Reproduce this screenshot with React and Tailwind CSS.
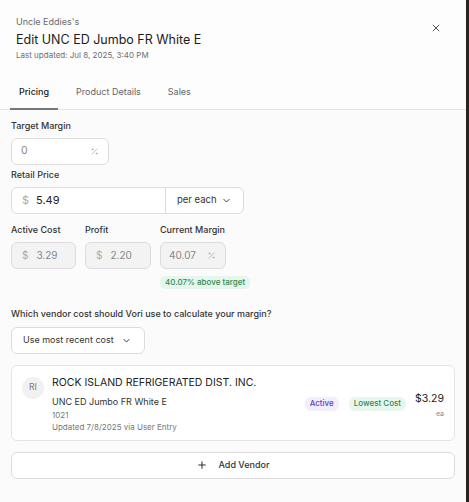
import React from "react";

const Chevron = ({ className = "" }) => (
  <svg className={className} width="9" height="9" viewBox="0 0 24 24" fill="none" stroke="currentColor" strokeWidth="2.5" strokeLinecap="round" strokeLinejoin="round">
    <path d="M5 9l7 7 7-7" />
  </svg>
);

const Pct = () => (
  <svg width="9" height="9" viewBox="0 0 24 24" fill="none" stroke="currentColor" strokeWidth="2" strokeLinecap="round">
    <path d="M19 5L5 19" />
    <circle cx="6.5" cy="6.5" r="1.5" />
    <circle cx="17.5" cy="17.5" r="1.5" />
  </svg>
);

const Label = ({ children, className = "" }) => (
  <div className={"text-[9px] font-medium leading-[12px] text-[#333] " + className}>{children}</div>
);

export default function App() {
  return (
    <div className="flex h-[502px] w-[469px] bg-[#2b241d]" style={{ fontFamily: "Inter, 'Noto Sans', sans-serif" }}>
      <div className="flex h-full w-[466px] flex-col bg-[#fbfbfb]">
        {/* Header */}
        <div className="bg-[#fdfdfd]">
          <div className="flex items-start justify-between pl-4 pr-[25px] pt-[16px]">
            <div className="flex flex-col">
              <div className="text-[9px] leading-[12px] text-[#6b6b6b]">Uncle Eddies's</div>
              <div className="mt-[4px] text-[12.5px] leading-[16px] text-[#1c1c1c]">Edit UNC ED Jumbo FR White E</div>
              <div className="mt-[1.5px] text-[8px] leading-[11px] text-[#6f6f6f]">Last updated: Jul 8, 2025, 3:40 PM</div>
            </div>
            <button className="mt-[7px] text-[#444]">
              <svg width="10" height="10" viewBox="0 0 24 24" fill="none" stroke="currentColor" strokeWidth="2.2" strokeLinecap="round">
                <path d="M5 5l14 14M19 5L5 19" />
              </svg>
            </button>
          </div>
          <div className="mt-[25px] flex border-b border-[#e2e2e2] pl-[10px] text-[9px] leading-[12px]">
            <div className="relative px-[9px] pb-[11px] font-medium text-[#222]">
              Pricing
              <div className="absolute bottom-[-1px] left-0 right-0 h-[2px] bg-[#777]" />
            </div>
            <div className="ml-[18px] pb-[11px] text-[#666]">Product Details</div>
            <div className="ml-[27px] pb-[11px] text-[#666]">Sales</div>
          </div>
        </div>

        {/* Body */}
        <div className="flex flex-col px-[11px] pt-[10px]">
          <Label>Target Margin</Label>
          <div className="mt-[6px] flex h-[27px] w-[98px] items-center justify-between rounded-[6px] border border-[#dcdcdc] bg-white pl-[9px] pr-[9px] text-[10.5px] text-[#888]">
            <span>0</span>
            <span className="text-[#aaa]"><Pct /></span>
          </div>

          <Label className="mt-[4px]">Retail Price</Label>
          <div className="mt-[6px] flex h-[27px] w-[233px] items-stretch rounded-[6px] border border-[#dcdcdc] bg-white">
            <div className="flex w-[154px] items-center border-r border-[#dcdcdc] pl-[10px] text-[11px]">
              <span className="text-[#aaa]">$</span>
              <span className="ml-[7px] text-[#222]">5.49</span>
            </div>
            <div className="flex flex-1 items-center justify-between pl-[11px] pr-[12px] text-[9.5px] text-[#333]">
              <span>per each</span>
              <Chevron className="text-[#333]" />
            </div>
          </div>

          <div className="mt-[10px] flex gap-[9px]">
            <div className="flex flex-col">
              <Label>Active Cost</Label>
              <div className="mt-[6px] flex h-[27px] w-[65px] items-center rounded-[6px] border border-[#dcdcdc] bg-[#f3f3f3] pl-[10px] text-[10px] text-[#888]">
                <span className="text-[#aaa]">$</span>
                <span className="ml-[8px]">3.29</span>
              </div>
            </div>
            <div className="flex flex-col">
              <Label>Profit</Label>
              <div className="mt-[6px] flex h-[27px] w-[66px] items-center rounded-[6px] border border-[#dcdcdc] bg-[#f3f3f3] pl-[10px] text-[10px] text-[#888]">
                <span className="text-[#aaa]">$</span>
                <span className="ml-[8px]">2.20</span>
              </div>
            </div>
            <div className="flex flex-col">
              <Label>Current Margin</Label>
              <div className="mt-[6px] flex h-[27px] w-[66px] items-center justify-between rounded-[6px] border border-[#dcdcdc] bg-[#f3f3f3] pl-[8px] pr-[9px] text-[10px] text-[#888]">
                <span>40.07</span>
                <span className="text-[#aaa]"><Pct /></span>
              </div>
              <div className="mt-[7px] self-start whitespace-nowrap rounded-[5px] bg-[#e6f6ec] px-[5px] py-[1px] text-[8px] font-medium leading-[11px] text-[#2f8a55]">40.07% above target</div>
            </div>
          </div>

          <Label className="mt-[19px]">Which vendor cost should Vori use to calculate your margin?</Label>
          <div className="mt-[7px] flex h-[27px] w-[134px] items-center justify-between whitespace-nowrap rounded-[6px] border border-[#dcdcdc] bg-white pl-[11px] pr-[13px] text-[9px] text-[#333]">
            <span>Use most recent cost</span>
            <Chevron className="text-[#333]" />
          </div>

          {/* Vendor card */}
          <div className="mt-[11px] flex h-[76px] items-start rounded-[6px] border border-[#e4e4e4] bg-white pl-[10px] pr-[10px] pt-[10px]">
            <div className="mt-[1px] flex h-[22px] w-[22px] shrink-0 items-center justify-center rounded-full bg-[#f1f1f1] text-[8.5px] text-[#777]">RI</div>
            <div className="ml-[8px] flex flex-1 flex-col">
              <div className="text-[10.5px] leading-[14px] text-[#222]">ROCK ISLAND REFRIGERATED DIST. INC.</div>
              <div className="flex items-start">
                <div className="flex flex-1 flex-col">
                  <div className="mt-[6px] text-[9px] leading-[12px] text-[#333]">UNC ED Jumbo FR White E</div>
                  <div className="mt-[1px] text-[8px] leading-[12px] text-[#777]">1021</div>
                  <div className="text-[8px] leading-[12px] text-[#777]">Updated 7/8/2025 via User Entry</div>
                </div>
                <div className="mt-[7px] flex items-center gap-[10px]">
                  <span className="rounded-[6px] bg-[#f1eefd] px-[5px] py-[1.5px] text-[8px] font-medium leading-[11px] text-[#5a43c6]">Active</span>
                  <span className="rounded-[6px] bg-[#e8f7ee] px-[5px] py-[1.5px] text-[8px] font-medium leading-[11px] text-[#2f8a55]">Lowest Cost</span>
                </div>
                <div className="mt-[2px] ml-[9px] flex flex-col items-end">
                  <div className="text-[10.5px] leading-[14px] text-[#222]">$3.29</div>
                  <div className="mt-[3px] text-[7px] leading-[9px] text-[#888]">ea</div>
                </div>
              </div>
            </div>
          </div>

          {/* Add vendor */}
          <button className="mt-[11px] flex h-[27px] items-center justify-center rounded-[6px] border border-[#dcdcdc] bg-white text-[9px] font-medium text-[#333]">
            <svg width="10" height="10" viewBox="0 0 24 24" fill="none" stroke="currentColor" strokeWidth="2.5" strokeLinecap="round">
              <path d="M12 4v16M4 12h16" />
            </svg>
            <span className="ml-[12px]">Add Vendor</span>
          </button>
        </div>
      </div>
    </div>
  );
}
